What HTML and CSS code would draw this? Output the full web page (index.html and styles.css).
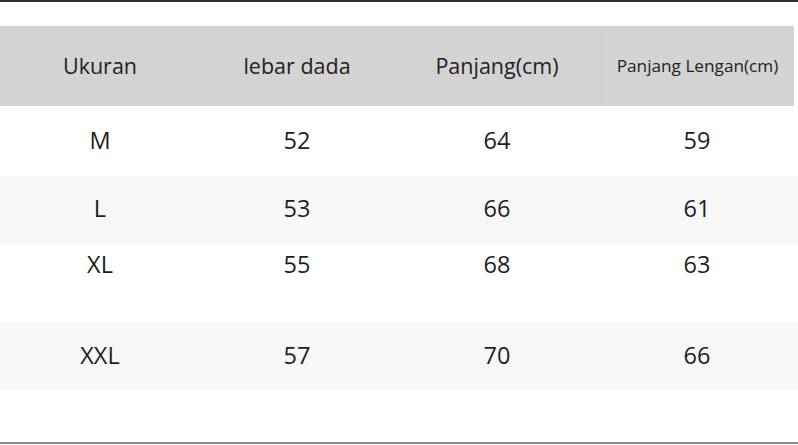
FILE: index.html
```html
<!DOCTYPE html>
<html>
<head>
<meta charset="utf-8">
<link rel="stylesheet" href="styles.css">
</head>
<body>
<div class="page">
  <div class="topline"></div>
  <div class="table">
    <div class="row head">
      <div class="cell">Ukuran</div>
      <div class="cell">lebar dada</div>
      <div class="cell">Panjang(cm)</div>
      <div class="cell small divider">Panjang Lengan(cm)</div>
    </div>
    <div class="row r-m">
      <div class="cell">M</div><div class="cell">52</div><div class="cell">64</div><div class="cell">59</div>
    </div>
    <div class="row r-l band">
      <div class="cell">L</div><div class="cell">53</div><div class="cell">66</div><div class="cell">61</div>
    </div>
    <div class="row r-xl">
      <div class="cell">XL</div><div class="cell">55</div><div class="cell">68</div><div class="cell">63</div>
    </div>
    <div class="row r-xxl band">
      <div class="cell">XXL</div><div class="cell">57</div><div class="cell">70</div><div class="cell">66</div>
    </div>
  </div>
  <div class="spacer"></div>
  <div class="bottomline"></div>
</div>
</body>
</html>
```
FILE: styles.css
```css
* { box-sizing: border-box; }
html, body { margin: 0; padding: 0; background: #ffffff; }
body {
  font-family: "Open Sans", "Noto Sans", sans-serif;
  color: #1e1e1e;
  width: 798px;
  height: 445px;
  overflow: hidden;
}
.page {
  display: flex;
  flex-direction: column;
  height: 445px;
}
.topline {
  height: 2px;
  background: #2e2e2e;
  margin-bottom: 24px;
}
.table {
  display: flex;
  flex-direction: column;
}
.row {
  display: grid;
  grid-template-columns: 200px 194px 206px 194px;
  align-items: center;
  font-size: 23.5px;
  line-height: 30px;
}
.cell {
  text-align: center;
  height: 100%;
  display: flex;
  align-items: center;
  justify-content: center;
}
.head {
  height: 80px;
  background: #d3d3d3;
  margin-right: 4px;
  font-size: 21.5px;
  color: #222222;
}
.head .cell { padding-bottom: 1px; }
.head .small { font-size: 17.2px; }
.divider { border-left: 1px solid #cdcdcd; }
.band { background: #f7f7f7; }
.r-m { height: 70px; }
.r-m .cell { padding-bottom: 3px; }
.r-l { height: 67px; }
.r-l .cell { padding-bottom: 4px; }
.r-xl { height: 79px; }
.r-xl .cell { align-items: flex-start; padding-top: 6px; }
.r-xxl { height: 68px; }
.r-xxl .cell { padding-bottom: 3px; }
.spacer { flex: 1; }
.bottomline {
  height: 2px;
  background: #8c8c8c;
  margin-bottom: 1px;
}
```
